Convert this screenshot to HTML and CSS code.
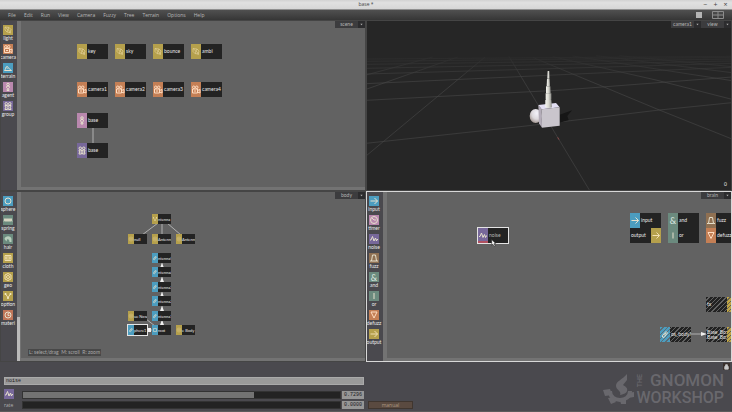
FILE: index.html
```html
<!DOCTYPE html>
<html lang="en">
<head>
  <meta charset="UTF-8" />
  <meta name="viewport" content="width=device-width, initial-scale=1.0"/>
  <title>base *</title>
  <link rel="stylesheet" href="styles.css">
</head>
<body>

  <!-- icon set -->
  <svg class="symbols" aria-hidden="true">
    <symbol id="i-light" viewBox="0 0 20 20"><path d="M4 4l8 1 4 4-2 6-6-1-4-4zM5 5l10 9M12 5l-4 9M13 15l3 1"/></symbol>
    <symbol id="i-camera" viewBox="0 0 20 20"><circle cx="5.500" cy="5.500" r="2.500"/><circle cx="11.500" cy="5.500" r="2.500"/><path d="M3 9h10v8H3zM13 12l5-2v7l-5-2M6 13h4"/></symbol>
    <symbol id="i-terrain" viewBox="0 0 20 20"><path d="M3 15c2-1 2-8 5-8s2 4 4 4 2 3 5 4zM7 10l2 1"/></symbol>
    <symbol id="i-agent" viewBox="0 0 20 20"><circle cx="10" cy="5" r="2.5"/><path d="M8 8h4l1 3-2 2 1 4H8l1-4-2-2z"/></symbol>
    <symbol id="i-group" viewBox="0 0 20 20"><circle cx="6.500" cy="5.500" r="2.500"/><circle cx="13.500" cy="5.500" r="2.500"/><path d="M4 9h5l-1 4 1 4H4l1-4zM11 9h5l-1 4 1 4h-5l1-4z"/></symbol>
    <symbol id="i-sphere" viewBox="0 0 20 20"><circle cx="10" cy="10" r="6"/></symbol>
    <symbol id="i-spring" viewBox="0 0 20 20"><path d="M2 13l2-6 2 6 2-6 2 6 2-6 2 6 2-6 2 6"/></symbol>
    <symbol id="i-hair" viewBox="0 0 20 20"><path class="solid" d="M3 10c1-7 13-8 14 0v6h-4c0-4-2-6-5-5l-1 4z"/></symbol>
    <symbol id="i-cloth" viewBox="0 0 20 20"><path d="M4 5h12v10H4zM6 8h8v4H6z"/></symbol>
    <symbol id="i-geo" viewBox="0 0 20 20"><path d="M10 3l6 3v8l-6 3-6-3V6z"/><circle cx="10" cy="10" r="3"/></symbol>
    <symbol id="i-option" viewBox="0 0 20 20"><path d="M5 6l5 7 5-7"/><circle class="dot" cx="5" cy="6" r="2"/><circle class="dot" cx="15" cy="6" r="2"/><circle class="dot" cx="10" cy="14" r="2"/></symbol>
    <symbol id="i-material" viewBox="0 0 20 20"><circle cx="10" cy="10" r="6"/><path d="M10 11V7l4-2M10 11h3"/></symbol>
    <symbol id="i-bone" viewBox="0 0 20 20"><path d="M5 12l7-8 3 3-7 9-3-1zM8 12l4-5"/></symbol>
    <symbol id="i-root" viewBox="0 0 20 20"><path d="M5 5h10v10H5z"/></symbol>
    <symbol id="i-arrow" viewBox="0 0 20 20"><path d="M3 10h14M11 4l6 6-6 6"/></symbol>
    <symbol id="i-timer" viewBox="0 0 20 20"><circle cx="10" cy="10" r="7"/><path d="M6 6l4 4h4"/></symbol>
    <symbol id="i-noise" viewBox="0 0 20 20"><path d="M2 12h2l3-7 3 9 3-6 2 6 1-3h2"/></symbol>
    <symbol id="i-fuzz" viewBox="0 0 20 20"><path d="M2 16h3L7 4h6l2 12h3M5 16h10"/></symbol>
    <symbol id="i-or" viewBox="0 0 20 20"><path d="M10 4v12"/></symbol>
    <symbol id="i-defuzz" viewBox="0 0 20 20"><path d="M4 4h12l-6 12z"/></symbol>
    <symbol id="i-down" viewBox="0 0 8 8"><path d="M1 2h6L4 6z"/></symbol>
  </svg>

  <header class="titlebar">
    <h1>base *</h1>
    <div class="window-buttons">
      <button aria-label="Minimize">−</button>
      <button aria-label="Maximize">+</button>
      <button aria-label="Close">×</button>
    </div>
  </header>

  <nav class="menubar">
    <button>File</button>
    <button>Edit</button>
    <button>Run</button>
    <button>View</button>
    <button>Camera</button>
    <button>Fuzzy</button>
    <button>Tree</button>
    <button>Terrain</button>
    <button>Options</button>
    <button>Help</button>
    <div class="layouts">
      <button class="layout-single" aria-label="Single view"></button>
      <button class="layout-quad" aria-label="Four views"><svg viewBox="0 0 12 8"><path d="M.5.5h11v7H.5zM6 .5v7M.5 4h11"/></svg></button>
    </div>
  </nav>

  <main class="workspace">

    <section class="pane">
      <div class="palette">
        <button><svg class="icon light"><use href="#i-light"/></svg><span>light</span></button>
        <button><svg class="icon camera"><use href="#i-camera"/></svg><span>camera</span></button>
        <button><svg class="icon terrain"><use href="#i-terrain"/></svg><span>terrain</span></button>
        <button><svg class="icon agent"><use href="#i-agent"/></svg><span>agent</span></button>
        <button><svg class="icon group"><use href="#i-group"/></svg><span>group</span></button>
      </div>
      <div class="scroll-y"></div>
      <div class="view">
        <div class="canvas">
          <svg class="edges"><path d="M72 107v22"/></svg>
          <div class="node n-key"><svg class="icon light"><use href="#i-light"/></svg><span>key</span></div>
          <div class="node n-sky"><svg class="icon light"><use href="#i-light"/></svg><span>sky</span></div>
          <div class="node n-bounce"><svg class="icon light"><use href="#i-light"/></svg><span>bounce</span></div>
          <div class="node n-ambi"><svg class="icon light"><use href="#i-light"/></svg><span>ambi</span></div>
          <div class="node n-camera1"><svg class="icon camera"><use href="#i-camera"/></svg><span>camera1</span></div>
          <div class="node n-camera2"><svg class="icon camera"><use href="#i-camera"/></svg><span>camera2</span></div>
          <div class="node n-camera3"><svg class="icon camera"><use href="#i-camera"/></svg><span>camera3</span></div>
          <div class="node n-camera4"><svg class="icon camera"><use href="#i-camera"/></svg><span>camera4</span></div>
          <div class="node n-agent"><svg class="icon agent"><use href="#i-agent"/></svg><span>base</span></div>
          <div class="node n-group"><svg class="icon group"><use href="#i-group"/></svg><span>base</span></div>
        </div>
        <div class="scroll-x"></div>
      </div>
      <div class="tabs">
        <label class="tab"><select aria-label="Pane type"><option>scene</option></select><svg><use href="#i-down"/></svg></label>
      </div>
    </section>

    <section class="pane viewport">
      <svg class="scene3d" viewBox="3 3 1092 507" preserveAspectRatio="xMidYMid slice">
        <defs>
          <linearGradient id="fade" x1="0" y1="100" x2="0" y2="180" gradientUnits="userSpaceOnUse">
            <stop offset="0" stop-color="#2a2a2a"/>
            <stop offset="1" stop-color="#444"/>
          </linearGradient>
          <linearGradient id="tube" x1="0" x2="1" y1="0" y2="0">
            <stop offset="0" stop-color="#f4f4ee"/>
            <stop offset=".5" stop-color="#d8d8d0"/>
            <stop offset="1" stop-color="#8c8c88"/>
          </linearGradient>
          <radialGradient id="ball" cx=".6" cy=".3" r=".7">
            <stop offset="0" stop-color="#f4f2fa"/>
            <stop offset=".6" stop-color="#dcd8dc"/>
            <stop offset="1" stop-color="#a89c98"/>
          </radialGradient>
        </defs>
        <g fill="none" stroke="url(#fade)" stroke-width="2">
          <path d="M0 408L357 111M0 208L275 111M0 165L200 111M428 108L670 510M500 112L880 270 1098 357M560 110L870 180 1098 238M620 108L1098 182M690 107L1098 158M760 107L1098 140"/>
          <path d="M0 370L480 318 880 270 1098 248M0 241L590 210 1098 171M0 191L740 157 1098 142M0 162L1098 130M0 145L1098 123M0 133L1098 117M0 124L1098 112M0 117L1098 109"/>
        </g>
        <path fill="#161616" d="M581 284l37-13-14 17 4 12-27 8z"/>
        <path stroke="#8a4a4a" stroke-width="3" d="M575 352l4 7"/>
        <ellipse cx="509" cy="288" rx="18" ry="21" fill="url(#ball)"/>
        <path fill="#b3acb8" d="M517 255l10 13 1 55-9-13z"/>
        <path fill="#e2def2" d="M517 255l53-6 11 13-54 6z"/>
        <path fill="#c9c5cc" d="M527 268l54-6v55l-53 6z"/>
        <g fill="url(#tube)">
          <path d="M538 240h18l2 22q-10 4-20 0z"/>
          <path d="M539 220h17v19q-8 4-17 0z"/>
          <path d="M540 199h13l1 20q-7 3-14 0z"/>
          <path d="M543 177h8l1 20q-5 3-10 0z"/>
          <path d="M545 153h5l1 23h-7z"/>
        </g>
      </svg>
      <div class="tabs">
        <label class="tab"><select aria-label="Camera"><option>camera1</option></select><svg><use href="#i-down"/></svg></label>
        <label class="tab"><select aria-label="Pane type"><option>view</option></select><svg><use href="#i-down"/></svg></label>
      </div>
      <span class="frame">0</span>
    </section>

    <section class="pane">
      <div class="palette">
        <button><svg class="icon terrain"><use href="#i-sphere"/></svg><span>sphere</span></button>
        <button><svg class="icon spring"><use href="#i-spring"/></svg><span>spring</span></button>
        <button><svg class="icon spring"><use href="#i-hair"/></svg><span>hair</span></button>
        <button><svg class="icon geo"><use href="#i-cloth"/></svg><span>cloth</span></button>
        <button><svg class="icon geo"><use href="#i-geo"/></svg><span>geo</span></button>
        <button><svg class="icon geo"><use href="#i-option"/></svg><span>option</span></button>
        <button><svg class="icon material"><use href="#i-material"/></svg><span>materi</span></button>
      </div>
      <div class="scroll-y"><div class="thumb"></div></div>
      <div class="view">
        <div class="canvas small">
          <svg class="edges">
            <path d="M137 31L121 43M141 31v12M146 31L160 43M125 127L134 134M141 69v65M125 138h8"/>
            <path class="heads" d="M139 76l2-5 2 5zM139 90l2-5 2 5zM139 105l2-5 2 5zM139 119l2-5 2 5zM139 133l2-5 2 5zM127 136v4h3v-4z"/>
          </svg>
          <div class="node n-antenna"><svg class="icon geo"><use href="#i-option"/></svg><span>ntenna</span></div>
          <div class="node n-null"><svg class="icon geo"><use href="#i-geo"/></svg><span>null</span></div>
          <div class="node n-ant-a"><svg class="icon geo"><use href="#i-geo"/></svg><span>Antenn</span></div>
          <div class="node n-ant-b"><svg class="icon geo"><use href="#i-geo"/></svg><span>Antenn</span></div>
          <div class="node n-seg5"><svg class="icon terrain"><use href="#i-bone"/></svg><span>ntenna5</span></div>
          <div class="node n-seg4"><svg class="icon terrain"><use href="#i-bone"/></svg><span>ntenna4</span></div>
          <div class="node n-seg3"><svg class="icon terrain"><use href="#i-bone"/></svg><span>ntenna3</span></div>
          <div class="node n-seg2"><svg class="icon terrain"><use href="#i-bone"/></svg><span>ntenna2</span></div>
          <div class="node n-seg1"><svg class="icon terrain"><use href="#i-bone"/></svg><span>ntenna1</span></div>
          <div class="node n-nose"><svg class="icon geo"><use href="#i-geo"/></svg><span>ue Nose</span></div>
          <div class="node n-sphere1 selected"><svg class="icon terrain"><use href="#i-bone"/></svg><span>phere1</span></div>
          <div class="node n-root"><svg class="icon terrain"><use href="#i-root"/></svg><span>root</span></div>
          <div class="node n-body"><svg class="icon geo"><use href="#i-geo"/></svg><span>e Body</span></div>
          <p class="hint">L: select/drag&nbsp; M: scroll&nbsp; R: zoom</p>
        </div>
        <div class="scroll-x"></div>
      </div>
      <div class="tabs">
        <label class="tab"><select aria-label="Pane type"><option>body</option></select><svg><use href="#i-down"/></svg></label>
      </div>
    </section>

    <section class="pane active">
      <div class="palette">
        <button><svg class="icon terrain"><use href="#i-arrow"/></svg><span>input</span></button>
        <button><svg class="icon agent"><use href="#i-timer"/></svg><span>timer</span></button>
        <button><svg class="icon group"><use href="#i-noise"/></svg><span>noise</span></button>
        <button><svg class="icon fuzz"><use href="#i-fuzz"/></svg><span>fuzz</span></button>
        <button><b class="icon spring">&amp;</b><span>and</span></button>
        <button><svg class="icon spring"><use href="#i-or"/></svg><span>or</span></button>
        <button><svg class="icon camera"><use href="#i-defuzz"/></svg><span>defuzz</span></button>
        <button><svg class="icon geo"><use href="#i-arrow"/></svg><span>output</span></button>
      </div>
      <div class="scroll-y"></div>
      <div class="view">
        <div class="canvas">
          <svg class="edges">
            <path d="M304 142h12"/>
            <path class="heads" d="M314 140l6 2-6 2z"/>
          </svg>
          <div class="node n-noise selected"><svg class="icon group"><use href="#i-noise"/></svg><span>noise</span></div>
          <div class="node n-input"><svg class="icon terrain"><use href="#i-arrow"/></svg><span>input</span></div>
          <div class="node n-output flip"><svg class="icon geo"><use href="#i-arrow"/></svg><span>output</span></div>
          <div class="node n-and"><b class="icon spring">&amp;</b><span>and</span></div>
          <div class="node n-or"><svg class="icon spring"><use href="#i-or"/></svg><span>or</span></div>
          <div class="node n-fuzz"><svg class="icon fuzz"><use href="#i-fuzz"/></svg><span>fuzz</span></div>
          <div class="node n-defuzz"><svg class="icon camera"><use href="#i-defuzz"/></svg><span>defuzz</span></div>
          <div class="node n-tx hatched flip"><i class="icon geo"></i><span>tx</span></div>
          <div class="node n-osbody hatched"><svg class="icon terrain"><use href="#i-bone"/></svg><span>os_body?</span></div>
          <div class="node n-basebox hatched flip"><i class="icon geo"></i><span>Base_Bo:<br>Base_Bo:</span></div>
          <svg class="pointer" viewBox="0 0 10 14"><path d="M1 1v10l2-2 2 4 2-1-2-4h3z"/></svg>
        </div>
        <div class="scroll-x"></div>
      </div>
      <div class="tabs">
        <label class="tab"><select aria-label="Pane type"><option>brain</option></select><svg><use href="#i-down"/></svg></label>
      </div>
    </section>

  </main>

  <footer class="inspector">
    <div class="params">
      <input class="name" type="text" value="noise" aria-label="Node name">
      <div class="param">
        <svg class="icon group"><use href="#i-noise"/></svg>
        <input class="slider filled" type="range" min="0" max="1" step="0.0001" value="0.7296" aria-label="Output">
        <input class="value" type="text" value="0.7296" aria-label="Output value">
      </div>
      <div class="param">
        <label for="rate">rate</label>
        <input class="slider" id="rate" type="range" min="0" max="1" step="0.0001" value="0">
        <input class="value" type="text" value="0.0000" aria-label="Rate value">
      </div>
    </div>
    <div class="side">
      <button class="manual">manual</button>
      <div class="logo">
        <svg viewBox="0 0 32 32">
          <path class="gear" d="M7 18c0 6 5 9 10 9s10-3 10-9"/>
          <path d="M0 17l7-1 2 6-7 1zM5 25l5-1 3 5-5 2zM17 27h6v4h-5zM25 20l6-1v5l-6 1z"/>
          <path d="M24 1v6l-4 5c3 2 5 3 4 6-1 3-4 3-7 4 2-4-4-5-4-9 0-5 6-6 11-12z"/>
        </svg>
        <div class="wordmark">
          <div class="line"><span class="the">THE</span><span class="gnomon">GNOMON</span></div>
          <div class="workshop">WORKSHOP</div>
        </div>
      </div>
      <button class="lock" aria-label="Lock"><svg viewBox="0 0 8 8"><path d="M2 4h4v3H2zM3 4V2h2v2"/></svg></button>
    </div>
  </footer>

</body>
</html>
```
FILE: styles.css
```css
:root {
  --canvas: #626262;
  --panel: #4a494e;
  --bar: #737373;
  --dark: #232323;
  --text: #eaeaea;
}

* {
  box-sizing: border-box;
  margin: 0;
  padding: 0;
}

body {
  font-family: "Open Sans", "Noto Sans", sans-serif;
  font-size: 5px;
  line-height: 7px;
  color: var(--text);
  background: var(--panel);
  min-height: 100vh;
  display: flex;
  flex-direction: column;
}

button,
input,
select {
  font: inherit;
  color: inherit;
  background: none;
  border: none;
  border-radius: 0;
  appearance: none;
  outline: none;
}

.symbols {
  position: absolute;
  width: 0;
  height: 0;
}

/* title and menu */
.titlebar {
  display: grid;
  grid-template-columns: 1fr auto 1fr;
  align-items: center;
  height: 10px;
  background: linear-gradient(#d2d2d2, #e0e0e0 30%, #d6d6d6);
  border-bottom: 1px solid #909090;
  color: #444;
}

.titlebar h1 {
  grid-column: 2;
  font-size: 5px;
  font-weight: normal;
}

.window-buttons {
  display: flex;
  justify-content: flex-end;
  gap: 5px;
  padding-right: 4px;
}

.window-buttons button {
  width: 5px;
  font-size: 7px;
}

.menubar {
  display: flex;
  align-items: center;
  gap: 8px;
  height: 10px;
  padding: 0 8px;
  background: linear-gradient(#505050, #363636);
  color: #b8b8b8;
}

.layouts {
  display: flex;
  align-items: center;
  gap: 10px;
  margin-left: auto;
}

.layout-single {
  width: 6px;
  height: 6px;
  background: #b4b4b4;
}

.layout-quad {
  width: 12px;
  height: 8px;
}

.layout-quad svg {
  display: block;
  fill: none;
  stroke: #8c8c8c;
}

/* panes */
.workspace {
  flex: 1;
  display: grid;
  grid-template-columns: 1fr 1fr;
  grid-template-rows: 1fr 1fr;
  font-family: Lato, "Open Sans", sans-serif;
}

.pane {
  position: relative;
  display: grid;
  grid-template-columns: 16px 4px 1fr;
  min-width: 0;
  overflow: hidden;
  border: 1px solid #454545;
}

.pane.active {
  border-color: #d8d8d8;
}

.pane.viewport {
  display: block;
  background: #262626;
}

.palette {
  display: flex;
  flex-direction: column;
  gap: 2px;
  padding: 4px 2px 0 0;
  background: var(--panel);
}

.palette button {
  display: flex;
  flex-direction: column;
  align-items: center;
}

.scroll-y {
  display: flex;
  align-items: flex-end;
  background: var(--bar);
}

.thumb {
  width: 3px;
  height: 26%;
  background: #bababa;
}

.view {
  display: flex;
  flex-direction: column;
  min-width: 0;
}

.canvas {
  position: relative;
  flex: 1;
  overflow: hidden;
  background: var(--canvas);
}

.scroll-x {
  height: 3px;
  background: var(--bar);
}

.tabs {
  position: absolute;
  top: 0;
  right: 0;
  display: flex;
  background: #3c3c3e;
  color: #b4b4b4;
}

.tab {
  display: flex;
  align-items: center;
  height: 7px;
}

.tab select {
  width: 23px;
  height: 7px;
  text-align: center;
  text-align-last: center;
}

.tab svg {
  width: 7px;
  height: 7px;
  padding: 2px;
  background: #2c2c2e;
  fill: #b4b4b4;
}

.scene3d {
  position: absolute;
  width: 100%;
  height: 100%;
}

.frame {
  position: absolute;
  right: 4px;
  bottom: 2px;
}

/* icons */
.icon {
  flex: none;
  width: 10px;
  height: 10px;
  fill: none;
  stroke: #e6e0cc;
  stroke-width: 2px;
}

b.icon {
  display: flex;
  align-items: center;
  justify-content: center;
  color: #dce8e0;
  font-size: 9px;
  font-weight: normal;
}

.solid {
  fill: #b8cebc;
  stroke: none;
}

.dot {
  fill: #f4ecc8;
  stroke: none;
}

.light,
.geo { background: #b5a04c; }
.camera { background: #c47f55; }
.terrain { background: #4c9dbf; }
.agent { background: #b988ae; }
.group { background: #77689a; }
.spring { background: #6b8a7e; }
.material { background: #bf7558; }
.fuzz { background: #8f7052; }

.light,
.camera,
.geo {
  stroke: #f0deb0;
  stroke-width: 1px;
}

.camera {
  stroke: #ffdcc0;
  stroke-width: 2px;
}

.palette .geo,
.flip .geo {
  stroke-width: 2px;
}

/* nodes */
.node {
  position: absolute;
  display: flex;
  align-items: center;
  width: 31px;
  height: 15px;
  overflow: hidden;
  background: var(--dark);
  white-space: nowrap;
}

.node .icon {
  height: 100%;
}

.node span {
  flex: 1;
  min-width: 0;
  padding-left: 1px;
}

.node.flip {
  flex-direction: row-reverse;
}

.node.selected {
  border: 1px solid #e4e4e4;
}

.small .node {
  width: 19px;
  height: 10px;
  font-size: 4px;
}

.small .node .icon {
  width: 6px;
}

.small .node span {
  padding-left: 0;
}

.small .node.selected {
  width: 21px;
  height: 12px;
}

.hatched {
  background: repeating-linear-gradient(135deg, #222 0 2px, #626262 2px 3px);
  line-height: 5px;
}

.hatched .terrain {
  background: repeating-linear-gradient(135deg, #4c9dbf 0 2px, #5c6c74 2px 3px);
}

.hatched .geo {
  background: repeating-linear-gradient(135deg, #c0a444 0 2px, #66624e 2px 3px);
}

.edges {
  position: absolute;
  width: 100%;
  height: 100%;
  fill: none;
  stroke: #b0b0b0;
}

.heads {
  fill: #f0f0f0;
  stroke: none;
}

/* scene graph */
.n-key { left: 56px; top: 23px; }
.n-sky { left: 94px; top: 23px; }
.n-bounce { left: 132px; top: 23px; }
.n-ambi { left: 170px; top: 23px; }
.n-camera1 { left: 56px; top: 61px; }
.n-camera2 { left: 94px; top: 61px; }
.n-camera3 { left: 132px; top: 61px; }
.n-camera4 { left: 170px; top: 61px; }
.n-agent { left: 56px; top: 92px; }
.n-group { left: 56px; top: 122px; }

/* body graph */
.n-antenna { left: 131px; top: 22px; }
.n-null { left: 107px; top: 42px; }
.n-ant-a { left: 131px; top: 42px; }
.n-ant-b { left: 155px; top: 42px; }
.n-seg5 { left: 131px; top: 61px; }
.n-seg4 { left: 131px; top: 75px; }
.n-seg3 { left: 131px; top: 90px; }
.n-seg2 { left: 131px; top: 104px; }
.n-seg1 { left: 131px; top: 119px; }
.n-nose { left: 107px; top: 119px; }
.n-sphere1 { left: 106px; top: 132px; }
.n-root { left: 131px; top: 133px; }
.n-body { left: 155px; top: 133px; }

/* brain graph */
.n-noise.selected {
  left: 90px;
  top: 35px;
  width: 32px;
  height: 17px;
  color: #b4b4b4;
}

.n-noise .icon { background: linear-gradient(to top, #b05060 2px, #77689a 2px); }
.n-input { left: 243px; top: 21px; }
.n-output { left: 243px; top: 36px; }
.n-and { left: 281px; top: 21px; }
.n-or { left: 281px; top: 36px; }
.n-fuzz { left: 319px; top: 21px; }
.n-defuzz { left: 319px; top: 36px; }
.n-tx { left: 319px; top: 105px; }
.n-osbody { left: 273px; top: 135px; }
.n-basebox { left: 319px; top: 135px; }

.pointer {
  position: absolute;
  left: 104px;
  top: 47px;
  width: 6px;
  height: 8px;
  fill: #fff;
  stroke: #222;
}

.hint {
  position: absolute;
  left: 7px;
  bottom: 2px;
  padding: 0 1px;
  background: #484848;
  color: #a8a8a8;
}

/* inspector */
.inspector {
  display: grid;
  grid-template-columns: 1fr 1fr;
  border-bottom: 1px solid #5c5c5c;
}

.params {
  display: flex;
  flex-direction: column;
  gap: 2px;
  padding: 15px 2px 2px 4px;
}

.name {
  width: 100%;
  height: 8px;
  margin-bottom: 2px;
  padding: 0 1px;
  background: #9a9a9a;
  border: 1px solid #aaa;
  color: #1c1c1c;
  font-family: "Liberation Mono", monospace;
}

.param {
  display: grid;
  grid-template-columns: 17px 1fr 22px;
  column-gap: 1px;
  align-items: end;
}

.param label {
  color: #b0b0b0;
}

.slider {
  width: 100%;
  min-width: 0;
  height: 8px;
  background: var(--dark);
  border: 1px solid #333;
}

.slider.filled {
  background: linear-gradient(to right, var(--bar) 73%, var(--dark) 73%);
}

.slider::-webkit-slider-thumb {
  appearance: none;
  width: 1px;
  height: 6px;
}

.value {
  width: 100%;
  height: 8px;
  background: #969696;
  color: #1c1c1c;
  font-family: "Liberation Mono", monospace;
  text-align: center;
}

.side {
  position: relative;
  display: flex;
  align-items: flex-end;
  justify-content: space-between;
  padding: 0 8px 2px 2px;
}

.manual {
  width: 45px;
  height: 8px;
  background: #5a4a40;
  border: 1px solid #40362f;
  color: #b09a84;
}

.logo {
  display: flex;
  align-items: center;
  gap: 1px;
  padding-bottom: 3px;
  color: #69686d;
  font-family: Roboto, sans-serif;
  font-weight: 500;
}

.logo svg {
  width: 32px;
  height: 32px;
  fill: #69686d;
}

.logo .gear {
  fill: none;
  stroke: #69686d;
  stroke-width: 4px;
}

.line {
  display: flex;
  align-items: center;
  justify-content: space-between;
}

.the {
  width: 8px;
  font-size: 7px;
  line-height: 8px;
  writing-mode: vertical-rl;
  rotate: 180deg;
}

.gnomon {
  font-size: 17px;
  line-height: 17px;
}

.workshop {
  font-size: 16px;
  line-height: 17px;
}

.lock {
  position: absolute;
  top: 1px;
  right: 2px;
  width: 7px;
  height: 7px;
  background: #3a302c;
}

.lock svg {
  display: block;
  fill: #c8c8c8;
  stroke: #c8c8c8;
}
```
